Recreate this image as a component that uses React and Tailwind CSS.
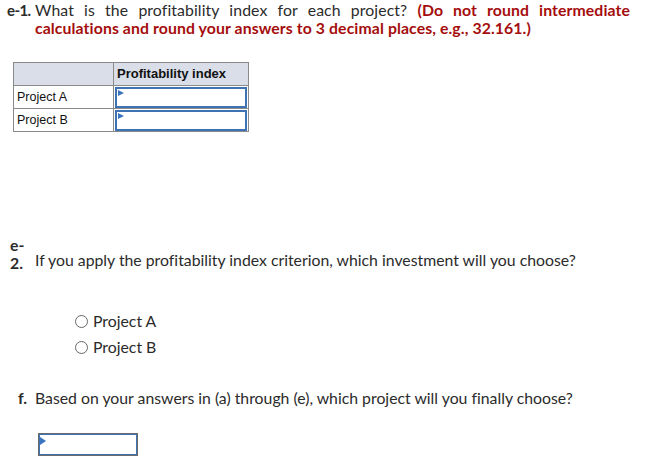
import React from 'react';

const Flag = () => (
  <span className="absolute left-[1px] top-[1px] w-0 h-0 border-t-[3px] border-b-[3px] border-l-[6px] border-t-transparent border-b-transparent border-l-[#3a73c0]"></span>
);

const CellInput = () => (
  <div className="relative h-[21px] mx-[1px] border-2 border-[#3f72b3] bg-white">
    <Flag />
  </div>
);

const Radio = ({ label }) => (
  <label className="flex items-center gap-[5px] h-[26px]">
    <span className="w-[13px] h-[13px] rounded-full border border-[#666] bg-white"></span>
    <span>{label}</span>
  </label>
);

export default function App() {
  return (
    <div className="w-[659px] h-[470px] bg-white text-[#2b2b2b] font-['Lato','Open_Sans',sans-serif] text-[15.8px] [font-variant-ligatures:none] overflow-hidden">
      <div className="flex pt-[1px] pl-[7px] pr-[29px] leading-[18px]">
        <span className="w-[28px] shrink-0 whitespace-nowrap font-bold text-[15px] tracking-[-0.6px]">e-1.</span>
        <div className="flex-1 tracking-[0.1px]">
          <p className="text-justify [text-align-last:justify]">
            What is the profitability index for each project?{' '}
            <span className="font-bold text-[#a50d0d]">(Do not round intermediate</span>
          </p>
          <p className="font-bold text-[#a50d0d]">calculations and round your answers to 3 decimal places, e.g., 32.161.)</p>
        </div>
      </div>

      <table className="mt-[25px] ml-[13px] border-collapse font-['Liberation_Sans',Arial,sans-serif] text-[12.5px] text-[#111]">
        <tbody>
          <tr className="h-[23px]">
            <td className="w-[100px] bg-[#d9dee8] border border-[#8a8a8a]"></td>
            <td className="w-[135px] bg-[#d9dee8] border border-[#8a8a8a] px-[3px] font-bold text-[13px] align-middle">Profitability index</td>
          </tr>
          <tr className="h-[23px]">
            <td className="border border-[#8a8a8a] px-[3px]">Project A</td>
            <td className="border border-[#8a8a8a] p-0"><CellInput /></td>
          </tr>
          <tr className="h-[23px]">
            <td className="border border-[#8a8a8a] px-[3px]">Project B</td>
            <td className="border border-[#8a8a8a] p-0"><CellInput /></td>
          </tr>
        </tbody>
      </table>

      <div className="flex mt-[104px] pl-[10px] leading-[18px]">
        <span className="w-[25px] shrink-0 font-bold">e-<br />2.</span>
        <p className="pt-[15px]">If you apply the profitability index criterion, which investment will you choose?</p>
      </div>

      <div className="mt-[36px] pl-[75px] flex flex-col">
        <Radio label="Project A" />
        <Radio label="Project B" />
      </div>

      <div className="flex mt-[29px] pl-[18px] leading-[18px]">
        <span className="w-[17px] shrink-0 font-bold">f.</span>
        <p>Based on your answers in (a) through (e), which project will you finally choose?</p>
      </div>

      <div className="relative mt-[26px] ml-[38px] w-[100px] h-[23px] border border-[#6b6b6b]">
        <div className="absolute inset-0 border border-[#3f72b3]"></div>
        <span className="absolute left-[1px] top-[3px] w-0 h-0 border-t-[4px] border-b-[4px] border-l-[6px] border-t-transparent border-b-transparent border-l-[#3a73c0]"></span>
      </div>
    </div>
  );
}
